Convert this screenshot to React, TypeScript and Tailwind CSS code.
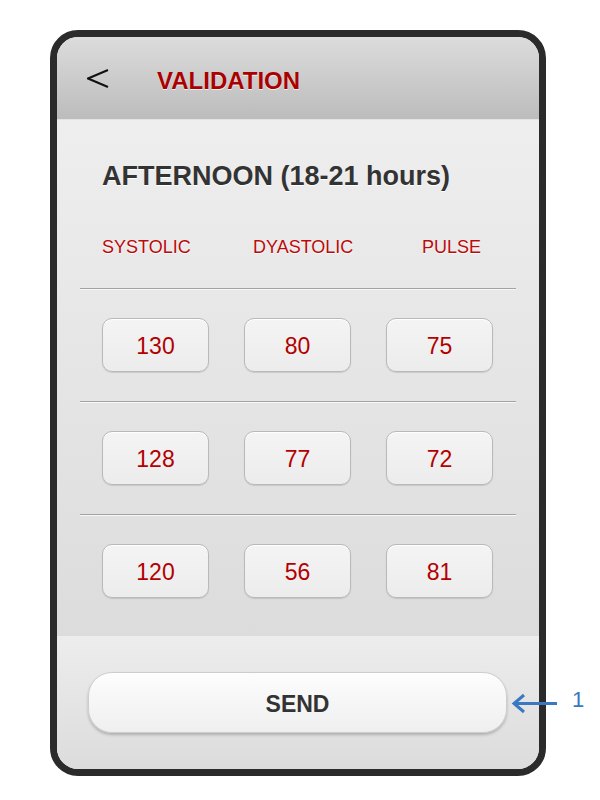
const rows = [
  ["130", "80", "75"],
  ["128", "77", "72"],
  ["120", "56", "81"],
];

function Divider() {
  return <div className="mx-[23px] h-px bg-[#a3a3a3] shadow-[0_1px_0_#f7f7f7]" />;
}

function ValueBox({ value }: { value: string }) {
  return (
    <div className="w-[107px] h-[54px] rounded-[10px] border border-[#b9b9b9] bg-gradient-to-b from-[#f4f4f4] to-[#ececec] shadow-[inset_0_1px_0_#ffffff,0_1px_1px_rgba(0,0,0,0.12)] flex items-center justify-center pt-[3px] text-[23px] text-[#b30000] leading-none">
      {value}
    </div>
  );
}

export default function App() {
  return (
    <div
      className="relative w-[600px] h-[800px] bg-white pt-[30px] pl-[50px]"
      style={{ fontFamily: '"Liberation Sans", Arial, sans-serif' }}
    >
      <div className="w-[496px] h-[746px] border-[7px] border-[#2b2b2b] rounded-[28px] overflow-hidden flex flex-col">
        {/* header */}
        <div className="h-[83px] shrink-0 flex items-center pl-[30px] bg-gradient-to-b from-[#dcdcdc] to-[#bcbcbc] border-b border-[#e2e2e2]">
          <svg width="22" height="22" viewBox="0 0 22 22" className="mt-[2px]">
            <polyline points="21,2 1,10.5 21,19" fill="none" stroke="#111" strokeWidth="2" />
          </svg>
          <div className="ml-[48px] mt-[5px] text-[24px] font-bold leading-none text-[#aa0000] [text-shadow:0_1px_0_#f2f2f2]">
            VALIDATION
          </div>
        </div>

        {/* body */}
        <div className="h-[516px] shrink-0 bg-gradient-to-b from-[#eeeeee] to-[#dcdcdc] flex flex-col">
          <div className="pt-[43px] pl-[45px] text-[27px] font-bold leading-none text-[#333333] [text-shadow:0_1px_0_#ffffff]">
            AFTERNOON (18-21 hours)
          </div>
          <div className="mt-[48px] pl-[45px] grid grid-cols-[151px_169px_100px] text-[18px] leading-none text-[#bb0a0a] [text-shadow:0_1px_0_#ffffff]">
            <span>SYSTOLIC</span>
            <span>DYASTOLIC</span>
            <span>PULSE</span>
          </div>
          <div className="mt-[32px]">
            {rows.map((row, i) => (
              <div key={i}>
                {i > 0 && <div className="h-[29px]" />}
                <Divider />
                <div className="flex gap-[35px] pl-[45px] mt-[29px]">
                  {row.map((v, j) => (
                    <ValueBox key={j} value={v} />
                  ))}
                </div>
              </div>
            ))}
          </div>
        </div>

        {/* footer */}
        <div className="flex-1 bg-gradient-to-b from-[#ededed] to-[#dcdcdc] pt-[36px] pl-[31px]">
          <button className="w-[419px] h-[61px] rounded-[24px] border border-[#cdcdcd] bg-gradient-to-b from-[#fdfdfd] to-[#efefef] shadow-[0_2px_3px_rgba(0,0,0,0.22)] flex items-center justify-center pt-[4px] text-[23px] font-bold text-[#333333] leading-none">
            SEND
          </button>
        </div>
      </div>

      {/* annotation */}
      <svg width="50" height="22" viewBox="0 0 50 22" className="absolute left-[510px] top-[693px]">
        <line x1="4" y1="10.5" x2="47" y2="10.5" stroke="#3a78c2" strokeWidth="3" />
        <polyline points="14,2 4,10.5 14,19" fill="none" stroke="#3a78c2" strokeWidth="3" />
      </svg>
      <div className="absolute left-[572px] top-[689px] text-[22px] leading-none text-[#3a78c2]">1</div>
    </div>
  );
}
